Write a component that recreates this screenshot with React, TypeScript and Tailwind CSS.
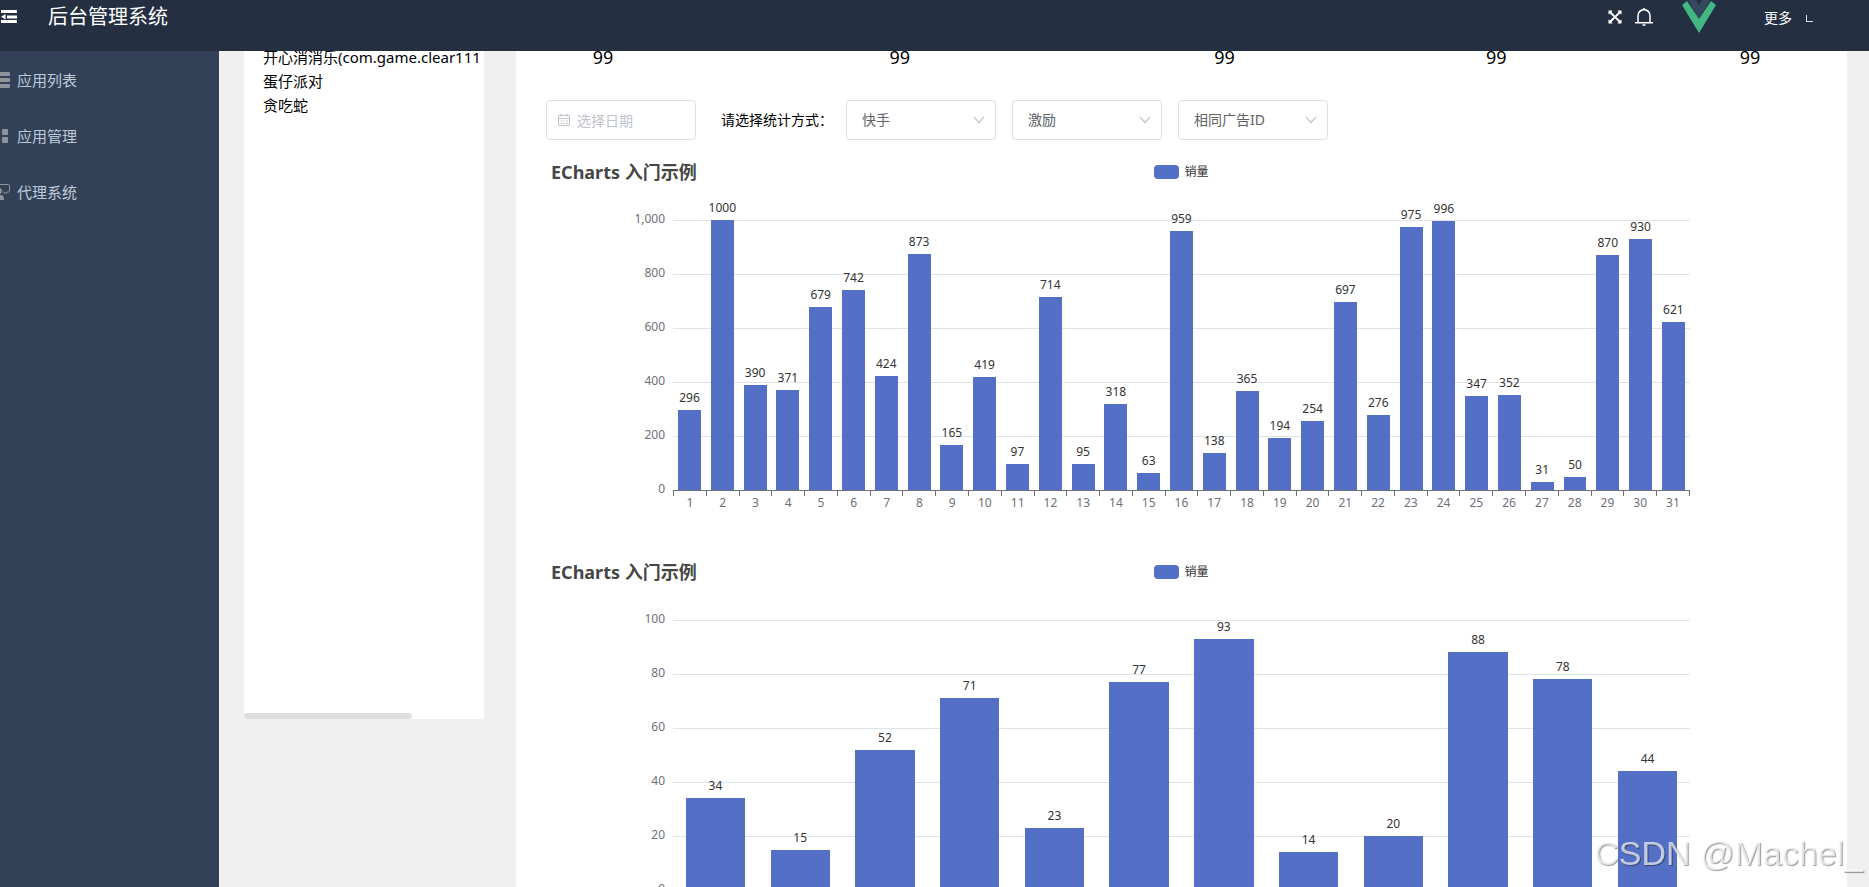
import { useState } from 'react';

const menus = [
  { name: '应用列表', icon: <ListIcon /> },
  { name: '应用管理', icon: <GridIcon /> },
  { name: '代理系统', icon: <ServiceIcon /> },
];

const apps = ['开心消消乐(com.game.clear1111)', '蛋仔派对', '贪吃蛇'];

const totals = [99, 99, 99, 99, 99];

const dailySales = [
  296, 1000, 390, 371, 679, 742, 424, 873, 165, 419, 97, 714, 95, 318, 63, 959,
  138, 365, 194, 254, 697, 276, 975, 996, 347, 352, 31, 50, 870, 930, 621,
];
const monthlySales = [34, 15, 52, 71, 23, 77, 93, 14, 20, 88, 78, 44];

function ListIcon() {
  return (
    <svg viewBox="0 0 10 18" className="h-[18px] w-[10px]" fill="#909399">
      <rect x="-6" y="1" width="16" height="4" rx="1" />
      <rect x="-6" y="7" width="16" height="4" rx="1" />
      <rect x="-6" y="13" width="16" height="4" rx="1" />
    </svg>
  );
}

function GridIcon() {
  return (
    <svg viewBox="0 0 10 18" className="h-[18px] w-[10px]" fill="#909399">
      <rect x="2" y="2" width="6" height="6" rx="1" />
      <rect x="2" y="10" width="6" height="6" rx="1" />
    </svg>
  );
}

function ServiceIcon() {
  return (
    <svg viewBox="0 0 10 18" className="h-[18px] w-[10px]" fill="none">
      <path d="M-4 1.500h12.500q1 0 1 1v5.500q0 1-1 1H7L5.500 11 4 9H3" stroke="#909399" />
      <circle cx="-1" cy="8" r="3" fill="#909399" />
      <path d="M-6 17q0-5 5-5h2q3 0 3 5z" fill="#909399" />
    </svg>
  );
}

function FoldIcon() {
  return (
    <svg viewBox="0 0 16 14" className="h-[14px] w-4" fill="#fff">
      <path d="M0 0h16v3H0zM6 5.500h10v3H6zM0 10h16v3H0z" />
      <path d="M4.500 4v5.500L0 6.800z" />
    </svg>
  );
}

function FullscreenIcon() {
  return (
    <svg viewBox="0 0 14 14" className="h-[14px] w-[14px]" fill="#fff">
      <path d="M0.500 0.500h4L3.500 1.900 7 5.700l3.500-3.800-1-1.400h4v4l-1.400-1L8.300 7l3.800 3.500 1.400-1v4h-4l1-1.400L7 8.300l-3.500 3.800 1 1.400h-4v-4l1.400 1L5.700 7 1.900 3.500l-1.400 1z" />
    </svg>
  );
}

function BellIcon() {
  return (
    <svg
      viewBox="0 0 18 18"
      className="h-[18px] w-[18px]"
      fill="none"
      stroke="#fff"
      strokeWidth="1.500"
    >
      <path d="M0 14.800h18M3 15V8q0-5.500 6-6.500 6 1 6 6.500v7" />
      <path d="M9 0v2M7.500 17h3" />
    </svg>
  );
}

function VueLogo() {
  return (
    <svg viewBox="0 0 34 34" className="h-[34px] w-[34px]">
      <path d="M6 0h22L17 19z" fill="#35495e" />
      <path d="M0 5L5 1l12 18L29 1l5 4-17 28z" fill="#41b883" />
      <path d="M14 0h6l-3 5z" fill="#242f42" />
    </svg>
  );
}

function CalendarIcon() {
  return (
    <svg
      viewBox="0 0 14 14"
      className="pointer-events-none absolute left-[11px] h-[14px] w-[14px]"
      fill="none"
      stroke="#c0c4cc"
    >
      <path d="M1.500 2.500h11v10h-11zM1.500 5.500h11M4 0.500v3M10 0.500v3M3.500 8h2M6.500 8h1.500M9 8h2M3.500 10.500h2M6.500 10.500h1.500M9 10.500h2" />
    </svg>
  );
}

function FilterSelect({ label, options }: { label: string; options: string[] }) {
  const [value, setValue] = useState(options[0]);

  return (
    <div className="relative flex w-[150px] items-center">
      <select
        aria-label={label}
        value={value}
        onChange={(e) => setValue(e.target.value)}
        className="h-10 w-full appearance-none rounded border border-[#dcdfe6] bg-white px-[15px] text-sm text-[#606266] focus:border-[#409eff] focus:outline-none"
      >
        {options.map((option) => (
          <option key={option}>{option}</option>
        ))}
      </select>
      <svg
        viewBox="0 0 12 8"
        className="pointer-events-none absolute right-[11px] h-2 w-3"
        fill="none"
        stroke="#c0c4cc"
        strokeWidth="1.200"
      >
        <path d="M1 1l5 5.500L11 1" />
      </svg>
    </div>
  );
}

function BarChart({ data, max, showLabels }: { data: number[]; max: number; showLabels?: boolean }) {
  const ticks = [0, 1, 2, 3, 4, 5].map((n) => (max / 5) * n);

  return (
    <section className="h-[400px]">
      <div className="grid h-[60px] grid-cols-[1fr_auto_1fr] px-[5px]">
        <h2 className="text-lg leading-6 font-bold text-[#464646]">ECharts 入门示例</h2>
        <div className="flex h-6 items-center gap-[5px] text-xs text-[#333]">
          <span className="h-[14px] w-[25px] rounded bg-[#5470c6]" />
          销量
        </div>
      </div>
      <div className="relative mx-[10%] h-[270px]">
        {ticks.map((tick) => (
          <div
            key={tick}
            className="absolute inset-x-0 -mb-px h-px bg-[#e0e4ea]"
            style={{ bottom: `${(tick / max) * 100}%` }}
          >
            <span className="absolute right-full bottom-0 mr-2 -mb-1.5 text-xs leading-4 text-[#6e7079]">
              {tick.toLocaleString('en-US')}
            </span>
          </div>
        ))}
        <div className="relative flex h-full">
          {data.map((value, i) => (
            <div key={i} className="flex flex-1 items-end justify-center">
              <div
                className="relative flex w-[70%] justify-center bg-[#5470c6]"
                style={{ height: `${(value / max) * 100}%` }}
              >
                <span className="absolute bottom-full mb-1 text-xs leading-4 text-[#333]">
                  {value}
                </span>
              </div>
            </div>
          ))}
        </div>
        <div className="relative flex border-t border-[#6e7079]">
          {data.map((_, i) => (
            <div
              key={i}
              className="h-[5px] flex-1 border-l border-[#6e7079] text-center text-xs leading-6 text-[#6e7079] last:border-r"
            >
              {showLabels && i + 1}
            </div>
          ))}
        </div>
      </div>
    </section>
  );
}

export default function App() {
  const [date, setDate] = useState('');

  return (
    <div className="flex h-screen flex-col overflow-hidden bg-[#f0f0f0] font-['Noto_Sans','Noto_Sans_CJK_SC',sans-serif] text-black">
      <header className="flex h-[51px] shrink-0 items-start bg-[#242f42] pr-14 pl-px text-white">
        <button type="button" aria-label="折叠菜单" className="mt-[10px]">
          <FoldIcon />
        </button>
        <h1 className="ml-[31px] text-xl leading-[34px]">后台管理系统</h1>
        <div className="ml-auto flex items-start">
          <button type="button" aria-label="全屏" className="mt-[10px]">
            <FullscreenIcon />
          </button>
          <button type="button" aria-label="消息" className="mt-2 ml-[13px]">
            <BellIcon />
          </button>
          <div className="ml-[29px]">
            <VueLogo />
          </div>
          <button type="button" className="ml-12 flex items-center text-sm leading-9">
            更多
            <span className="ml-[14px] h-[7px] w-[7px] border-b border-l border-[#dcdfe6]" />
          </button>
        </div>
      </header>

      <div className="flex min-h-0 flex-1">
        <nav className="w-[219px] shrink-0 bg-[#324157] pt-px text-[15px] text-[#bfcbd9]">
          {menus.map((menu) => (
            <a key={menu.name} href="#" className="flex h-14 items-center gap-[7px]">
              {menu.icon}
              {menu.name}
            </a>
          ))}
        </nav>

        <main className="flex min-w-0 flex-1 items-start overflow-hidden pr-[22px] pl-[25px]">
          <aside className="-mt-1.5 flex h-[674px] w-60 shrink-0 flex-col justify-between bg-white">
            <ul className="mr-1.5 ml-[19px] overflow-hidden text-[15px] leading-6 whitespace-nowrap">
              {apps.map((app) => (
                <li key={app}>{app}</li>
              ))}
            </ul>
            <div className="h-1.5 w-[70%] rounded-full bg-[#dedede]" />
          </aside>

          <div className="-mt-1.5 ml-8 min-w-0 flex-1 bg-white">
            <div className="grid grid-cols-[174fr_420fr_230fr_314fr_194fr] text-center text-lg leading-6">
              {totals.map((total, i) => (
                <span key={i}>{total}</span>
              ))}
            </div>

            <div className="px-[30px] pt-[31px]">
              <div className="mb-5 flex items-center text-sm">
                <div className="relative flex w-[150px] items-center">
                  <CalendarIcon />
                  <input
                    type="text"
                    aria-label="选择日期"
                    placeholder="选择日期"
                    value={date}
                    onChange={(e) => setDate(e.target.value)}
                    className="h-10 w-full rounded border border-[#dcdfe6] pr-3 pl-[30px] text-[#606266] placeholder:text-[#c0c4cc] focus:border-[#409eff] focus:outline-none"
                  />
                </div>
                <span className="mr-[13px] ml-[25px] whitespace-nowrap">请选择统计方式：</span>
                <div className="flex gap-4">
                  <FilterSelect label="平台" options={['快手', '抖音']} />
                  <FilterSelect label="广告类型" options={['激励', '插屏']} />
                  <FilterSelect label="统计维度" options={['相同广告ID', '不同广告ID']} />
                </div>
              </div>
              <BarChart data={dailySales} max={1000} showLabels />
              <BarChart data={monthlySales} max={100} />
            </div>
          </div>
        </main>
      </div>

      <div className="pointer-events-none fixed right-1.5 bottom-[14px] font-['Liberation_Sans',sans-serif] text-[34px] leading-10 text-white/70 [text-shadow:1px_1px_1px_rgba(0,0,0,0.4)]">
        CSDN @Machel_
      </div>
    </div>
  );
}
